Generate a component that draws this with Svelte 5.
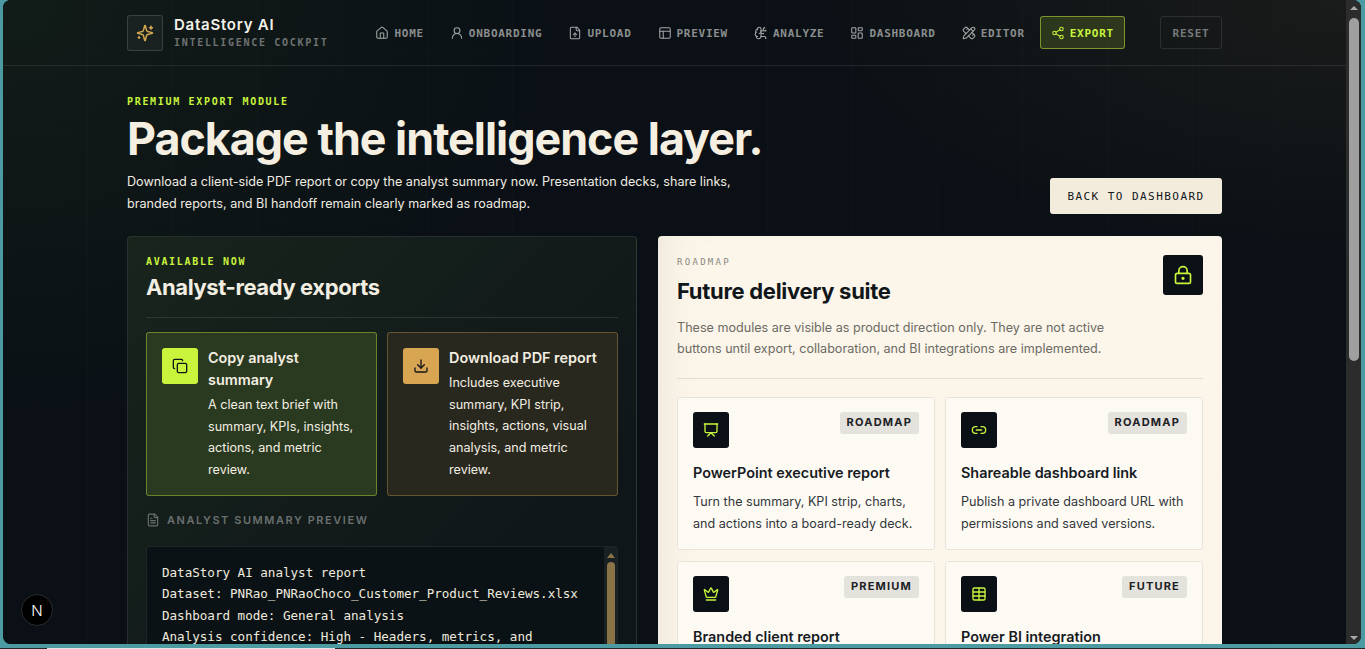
<script lang="ts">
// Export page of the DataStory AI cockpit

const icons: Record<string, string> = {
	home: '<path d="M15 21v-8a1 1 0 0 0-1-1h-4a1 1 0 0 0-1 1v8"/><path d="M3 10a2 2 0 0 1 .709-1.528l7-5.999a2 2 0 0 1 2.582 0l7 5.999A2 2 0 0 1 21 10v9a2 2 0 0 1-2 2H5a2 2 0 0 1-2-2z"/>',
	user: '<circle cx="12" cy="8" r="5"/><path d="M20 21a8 8 0 0 0-16 0"/>',
	upload: '<path d="M15 2H6a2 2 0 0 0-2 2v16a2 2 0 0 0 2 2h12a2 2 0 0 0 2-2V7Z"/><path d="M14 2v4a2 2 0 0 0 2 2h4"/><path d="M12 12v6"/><path d="m15 15-3-3-3 3"/>',
	preview: '<rect width="18" height="18" x="3" y="3" rx="2"/><path d="M3 9h18"/><path d="M9 21V9"/>',
	brain: '<path d="M12 5a3 3 0 1 0-5.997.125 4 4 0 0 0-2.526 5.77 4 4 0 0 0 .556 6.588A4 4 0 1 0 12 18Z"/><path d="M9 13a4.5 4.5 0 0 0 3-4"/><path d="M6.003 5.125A3 3 0 0 0 6.401 6.5"/><path d="M3.477 10.896a4 4 0 0 1 .585-.396"/><path d="M6 18a4 4 0 0 1-1.967-.516"/><path d="M12 13h4"/><path d="M12 18h6a2 2 0 0 1 2 2v1"/><path d="M12 8h8"/><path d="M16 8V5a2 2 0 0 1 2-2"/><circle cx="16" cy="13" r=".5"/><circle cx="18" cy="3" r=".5"/><circle cx="20" cy="21" r=".5"/><circle cx="20" cy="8" r=".5"/>',
	dashboard: '<rect width="7" height="9" x="3" y="3" rx="1"/><rect width="7" height="5" x="14" y="3" rx="1"/><rect width="7" height="9" x="14" y="12" rx="1"/><rect width="7" height="5" x="3" y="16" rx="1"/>',
	editor: '<path d="M13 7 8.7 2.7a2.41 2.41 0 0 0-3.4 0L2.7 5.3a2.41 2.41 0 0 0 0 3.4L7 13"/><path d="m8 6 2-2"/><path d="m18 16 2-2"/><path d="m17 11 4.3 4.3c.94.94.94 2.46 0 3.4l-2.6 2.6c-.94.94-2.46.94-3.4 0L11 17"/><path d="M21.174 6.812a1 1 0 0 0-3.986-3.987L3.842 16.174a2 2 0 0 0-.5.83l-1.321 4.352a.5.5 0 0 0 .623.622l4.353-1.32a2 2 0 0 0 .83-.497z"/><path d="m15 5 4 4"/>',
	share: '<circle cx="18" cy="5" r="3"/><circle cx="6" cy="12" r="3"/><circle cx="18" cy="19" r="3"/><line x1="8.59" x2="15.42" y1="13.51" y2="17.49"/><line x1="15.41" x2="8.59" y1="6.51" y2="10.49"/>',
	sparkles: '<path d="M9.937 15.5A2 2 0 0 0 8.5 14.063l-6.135-1.582a.5.5 0 0 1 0-.962L8.5 9.936A2 2 0 0 0 9.937 8.5l1.582-6.135a.5.5 0 0 1 .963 0L14.063 8.5A2 2 0 0 0 15.5 9.937l6.135 1.581a.5.5 0 0 1 0 .964L15.5 14.063a2 2 0 0 0-1.437 1.437l-1.582 6.135a.5.5 0 0 1-.963 0z"/><path d="M20 3v4"/><path d="M22 5h-4"/><path d="M4 17v2"/><path d="M5 18H3"/>',
	copy: '<rect width="14" height="14" x="8" y="8" rx="2"/><path d="M4 16c-1.1 0-2-.9-2-2V4c0-1.1.9-2 2-2h10c1.1 0 2 .9 2 2"/>',
	download: '<path d="M21 15v4a2 2 0 0 1-2 2H5a2 2 0 0 1-2-2v-4"/><polyline points="7 10 12 15 17 10"/><line x1="12" x2="12" y1="15" y2="3"/>',
	file: '<path d="M15 2H6a2 2 0 0 0-2 2v16a2 2 0 0 0 2 2h12a2 2 0 0 0 2-2V7Z"/><path d="M14 2v4a2 2 0 0 0 2 2h4"/><path d="M10 9H8"/><path d="M16 13H8"/><path d="M16 17H8"/>',
	lock: '<circle cx="12" cy="16" r="1"/><rect x="3" y="10" width="18" height="12" rx="2"/><path d="M7 10V7a5 5 0 0 1 10 0v3"/>',
	deck: '<path d="M2 3h20"/><path d="M21 3v11a2 2 0 0 1-2 2H5a2 2 0 0 1-2-2V3"/><path d="m7 21 5-5 5 5"/>',
	link: '<path d="M9 17H7A5 5 0 0 1 7 7h2"/><path d="M15 7h2a5 5 0 1 1 0 10h-2"/><line x1="8" x2="16" y1="12" y2="12"/>',
	crown: '<path d="M11.562 3.266a.5.5 0 0 1 .876 0L15.39 8.87a1 1 0 0 0 1.516.294L21.183 5.5a.5.5 0 0 1 .798.519l-2.834 10.246a1 1 0 0 1-.956.734H5.81a1 1 0 0 1-.957-.734L2.02 6.02a.5.5 0 0 1 .798-.519l4.276 3.664a1 1 0 0 0 1.516-.294z"/><path d="M5 21h14"/>',
	table: '<path d="M12 3v18"/><rect width="18" height="18" x="3" y="3" rx="2"/><path d="M3 9h18"/><path d="M3 15h18"/>'
};

const navItems = [
	{ label: 'Home', icon: 'home' },
	{ label: 'Onboarding', icon: 'user' },
	{ label: 'Upload', icon: 'upload' },
	{ label: 'Preview', icon: 'preview' },
	{ label: 'Analyze', icon: 'brain' },
	{ label: 'Dashboard', icon: 'dashboard' },
	{ label: 'Editor', icon: 'editor' },
	{ label: 'Export', icon: 'share', active: true }
];

const roadmapItems = [
	{ title: 'PowerPoint executive report', icon: 'deck', badge: 'Roadmap', text: 'Turn the summary, KPI strip, charts, and actions into a board-ready deck.' },
	{ title: 'Shareable dashboard link', icon: 'link', badge: 'Roadmap', text: 'Publish a private dashboard URL with permissions and saved versions.' },
	{ title: 'Branded client report', icon: 'crown', badge: 'Premium', text: '' },
	{ title: 'Power BI integration', icon: 'table', badge: 'Future', text: '' }
];

const summary = `DataStory AI analyst report
Dataset: PNRao_PNRaoChoco_Customer_Product_Reviews.xlsx
Dashboard mode: General analysis
Analysis confidence: High - Headers, metrics, and`;
</script>

{#snippet icon(name: string, size: number)}
	<svg width={size} height={size} viewBox="0 0 24 24" fill="none" stroke="currentColor" stroke-width="2" stroke-linecap="round" stroke-linejoin="round">
		{@html icons[name]}
	</svg>
{/snippet}

<div class="frame">
	<div class="window">
		<div class="page">
			<header class="topbar">
				<div class="topbar-inner">
					<div class="brand">
						<span class="brand-icon">{@render icon('sparkles', 18)}</span>
						<div>
							<div class="brand-name">DataStory AI</div>
							<div class="brand-sub">Intelligence cockpit</div>
						</div>
					</div>
					<nav class="nav">
						{#each navItems as item}
							<a class="nav-item" class:active={item.active} href="#top">
								{@render icon(item.icon, 14)}
								<span>{item.label}</span>
							</a>
						{/each}
					</nav>
					<button class="reset">Reset</button>
				</div>
			</header>

			<main class="content">
				<section class="hero">
					<div>
						<div class="eyebrow">Premium export module</div>
						<h1>Package the intelligence layer.</h1>
						<p>Download a client-side PDF report or copy the analyst summary now. Presentation decks, share links, branded reports, and BI handoff remain clearly marked as roadmap.</p>
					</div>
					<button class="back">Back to dashboard</button>
				</section>

				<section class="columns">
					<div class="panel dark">
						<div class="eyebrow small">Available now</div>
						<h2>Analyst-ready exports</h2>
						<div class="rule"></div>
						<div class="exports">
							<button class="export-card lime">
								<span class="export-icon">{@render icon('copy', 16)}</span>
								<span class="export-copy">
									<strong>Copy analyst summary</strong>
									<span>A clean text brief with summary, KPIs, insights, actions, and metric review.</span>
								</span>
							</button>
							<button class="export-card gold">
								<span class="export-icon">{@render icon('download', 16)}</span>
								<span class="export-copy">
									<strong>Download PDF report</strong>
									<span>Includes executive summary, KPI strip, insights, actions, visual analysis, and metric review.</span>
								</span>
							</button>
						</div>
						<div class="preview-label">
							{@render icon('file', 14)}
							<span>Analyst summary preview</span>
						</div>
						<div class="preview">
							<pre>{summary}</pre>
							<div class="mini-scroll">
								<i class="arrow"></i>
								<i class="mini-thumb"></i>
							</div>
						</div>
					</div>

					<div class="panel light">
						<div class="light-head">
							<div>
								<div class="tag">Roadmap</div>
								<h2>Future delivery suite</h2>
							</div>
							<span class="tile lock">{@render icon('lock', 20)}</span>
						</div>
						<p class="lead">These modules are visible as product direction only. They are not active buttons until export, collaboration, and BI integrations are implemented.</p>
						<div class="rule"></div>
						<div class="roadmap">
							{#each roadmapItems as item}
								<article class="road-card">
									<div class="road-top">
										<span class="tile">{@render icon(item.icon, 16)}</span>
										<span class="badge">{item.badge}</span>
									</div>
									<h3>{item.title}</h3>
									<p>{item.text}</p>
								</article>
							{/each}
						</div>
					</div>
				</section>
			</main>

			<div class="next-badge">N</div>
		</div>

		<div class="scrollbar">
			<i class="arrow up"></i>
			<i class="thumb"></i>
			<i class="arrow down"></i>
		</div>
	</div>
	<div class="taskline"></div>
</div>

<style>
:global(body) {
	margin: 0;
	background: #4c9aa2;
	overflow: hidden;
}

.frame {
	display: flex;
	flex-direction: column;
	gap: 4px;
	height: 649px;
	padding: 0 4px 0 3px;
	box-sizing: border-box;
}

.window {
	flex: 1;
	min-height: 0;
	display: flex;
	border-radius: 8px;
	overflow: hidden;
	background: #0a1015;
}

.taskline {
	flex: none;
	height: 1px;
	margin: 0 -4px 0 -3px;
	background: linear-gradient(90deg, #23282a 47px, #dfe3e3 47px, #dfe3e3 335px, #23282a 335px);
}

.page {
	position: relative;
	flex: 1;
	min-width: 0;
	height: 100%;
	overflow: hidden;
	font-family: Inter, "Noto Sans", sans-serif;
	color: #f5efe1;
	background:
		repeating-linear-gradient(90deg, transparent 0 84px, rgba(255, 255, 255, 0.012) 84px 85px),
		repeating-linear-gradient(0deg, transparent 0 84px, rgba(255, 255, 255, 0.008) 84px 85px),
		radial-gradient(ellipse 560px 420px at 0 0, rgba(60, 90, 40, 0.16), transparent 100%),
		radial-gradient(ellipse 560px 260px at 100% 0, rgba(60, 52, 38, 0.32), transparent 100%),
		#0a1015;
}

/* Top bar */
.topbar {
	height: 65px;
	border-bottom: 1px solid rgba(255, 255, 255, 0.09);
}

.topbar-inner {
	display: flex;
	align-items: center;
	width: 1095px;
	height: 100%;
	margin: 0 auto;
}

.brand {
	display: flex;
	align-items: center;
	gap: 11px;
	margin-right: 36px;
}

.brand-icon {
	display: flex;
	align-items: center;
	justify-content: center;
	width: 34px;
	height: 34px;
	border: 1px solid rgba(255, 255, 255, 0.14);
	border-radius: 3px;
	background: rgba(255, 255, 255, 0.04);
	color: #d3a64f;
}

.brand-name {
	font-size: 15px;
	font-weight: 600;
	line-height: 18px;
	letter-spacing: 0.75px;
	color: #f4f1e8;
}

.brand-sub {
	margin-top: 1px;
	font-family: "DejaVu Sans Mono", monospace;
	font-size: 10px;
	font-weight: 700;
	line-height: 15px;
	letter-spacing: 1.7px;
	text-transform: uppercase;
	color: #6f7273;
}

.nav {
	display: flex;
	gap: 4px;
}

.nav-item {
	display: flex;
	align-items: center;
	gap: 5px;
	height: 31px;
	padding: 0 10px;
	border: 1px solid transparent;
	border-radius: 3px;
	font-family: "DejaVu Sans Mono", monospace;
	font-size: 11px;
	font-weight: 700;
	letter-spacing: 0.73px;
	text-transform: uppercase;
	text-decoration: none;
	color: #8b8e8e;
}

.nav-item span {
	padding-top: 2px;
}

.nav-item svg {
	stroke-width: 1.8;
	color: #a3a6a6;
}

.nav-item.active {
	border-color: rgba(200, 245, 60, 0.5);
	background: rgba(200, 245, 60, 0.15);
	color: #c8f53c;
}

.nav-item.active svg {
	color: #c8f53c;
}

.reset {
	margin-left: auto;
	width: 62px;
	height: 33px;
	padding: 2px 0 0;
	border: 1px solid rgba(255, 255, 255, 0.1);
	border-radius: 3px;
	background: transparent;
	font-family: "DejaVu Sans Mono", monospace;
	font-size: 11px;
	font-weight: 700;
	letter-spacing: 0.75px;
	text-transform: uppercase;
	color: #777a7a;
}

/* Hero */
.content {
	width: 1095px;
	margin: 0 auto;
	padding-top: 29px;
}

.hero {
	display: flex;
	align-items: flex-end;
	justify-content: space-between;
	margin-bottom: 22px;
}

.eyebrow {
	font-family: "DejaVu Sans Mono", monospace;
	font-size: 10px;
	font-weight: 700;
	line-height: 14px;
	letter-spacing: 1.68px;
	text-transform: uppercase;
	color: #c8f53c;
}

h1 {
	margin: 7px 0 9px;
	font-size: 44.8px;
	font-weight: 700;
	line-height: 46px;
	letter-spacing: -1px;
	color: #f5efe1;
}

.hero p {
	width: 620px;
	margin: 0;
	font-size: 12.6px;
	line-height: 21.5px;
	color: #f0ece2;
}

.back {
	width: 172px;
	height: 36px;
	padding: 0;
	border: 0;
	border-radius: 3px;
	background: #f3ebdb;
	font-family: "DejaVu Sans Mono", monospace;
	font-size: 11px;
	font-weight: 500;
	letter-spacing: 1.45px;
	text-transform: uppercase;
	color: #11161a;
}

/* Panels */
.columns {
	display: grid;
	grid-template-columns: 510px 564px;
	gap: 21px;
	align-items: start;
}

.panel {
	padding: 19px;
	border-radius: 4px;
	box-sizing: border-box;
}

.panel.dark {
	border: 1px solid rgba(255, 255, 255, 0.1);
	padding: 18px;
	background: linear-gradient(135deg, #18241c, #0f1619 70%);
}

.panel.light {
	background: #fbf5ea;
	color: #11161a;
	box-shadow: inset 30px 0 40px -30px rgba(120, 110, 90, 0.14);
}

.panel h2 {
	margin: 3px 0 15px;
	font-size: 22px;
	font-weight: 700;
	line-height: 30px;
	letter-spacing: -0.4px;
	color: #f3eee2;
}

.rule {
	height: 1px;
	background: rgba(255, 255, 255, 0.1);
}

.exports {
	display: grid;
	grid-template-columns: 231px 231px;
	gap: 10px;
	margin-top: 14px;
}

.export-card {
	display: flex;
	gap: 10px;
	padding: 15px 15px 14px;
	border-radius: 3px;
	font-family: inherit;
	text-align: left;
	color: #f3eee2;
}

.export-card.lime {
	border: 1px solid rgba(200, 245, 60, 0.4);
	background: #2a3a20;
}

.export-card.gold {
	border: 1px solid rgba(211, 166, 79, 0.35);
	background: #28281f;
}

.export-icon {
	flex: none;
	display: flex;
	align-items: center;
	justify-content: center;
	width: 36px;
	height: 36px;
	border-radius: 3px;
	color: #11161a;
}

.lime .export-icon {
	background: #c8f53c;
}

.gold .export-icon {
	background: #d8a653;
}

.export-copy {
	display: flex;
	flex-direction: column;
	font-size: 12.6px;
	line-height: 21.7px;
}

.export-copy strong {
	margin: -1px 0 3px;
	font-size: 14.4px;
	font-weight: 600;
	line-height: 22px;
}

.preview-label {
	display: flex;
	align-items: center;
	gap: 7px;
	margin-top: 16px;
	height: 16px;
	font-size: 11px;
	font-weight: 600;
	letter-spacing: 1.55px;
	text-transform: uppercase;
	color: #6a6f70;
}

.preview {
	position: relative;
	margin-top: 18px;
	height: 220px;
	border: 1px solid rgba(255, 255, 255, 0.08);
	border-radius: 3px;
	background: #0b1216;
	overflow: hidden;
}

.preview pre {
	margin: 0;
	padding: 15px;
	font-family: "DejaVu Sans Mono", monospace;
	font-size: 12.6px;
	line-height: 21.4px;
	letter-spacing: -0.02px;
	color: #eeeade;
}

.mini-scroll {
	position: absolute;
	top: 0;
	right: 0;
	bottom: 0;
	width: 13px;
	background: #182024;
}

.mini-scroll .arrow {
	display: block;
	width: 0;
	margin: 6px auto 0;
	border: 4px solid transparent;
	border-top: 0;
	border-bottom: 5px solid #8a7347;
}

.mini-thumb {
	display: block;
	width: 8px;
	height: 120px;
	margin: 4px auto 0;
	border-radius: 4px;
	background: #8a7347;
}

/* Light panel */
.light-head {
	display: flex;
	align-items: flex-start;
	justify-content: space-between;
}

.tag {
	font-family: "DejaVu Sans Mono", monospace;
	font-size: 9px;
	line-height: 14px;
	letter-spacing: 2.3px;
	text-transform: uppercase;
	color: #8a8880;
}

.panel.light h2 {
	margin: 8px 0 0;
	line-height: 28px;
	letter-spacing: -0.3px;
	color: #11161a;
}

.tile {
	flex: none;
	display: flex;
	align-items: center;
	justify-content: center;
	width: 36px;
	height: 36px;
	border-radius: 3px;
	background: #0a1015;
	color: #c8f53c;
}

.tile.lock {
	width: 40px;
	height: 40px;
}

.lead {
	width: 470px;
	margin: 12px 0 19px;
	font-size: 12.6px;
	line-height: 21.2px;
	color: #6c6b64;
}

.panel.light .rule {
	background: #e3ddcf;
}

.roadmap {
	display: grid;
	grid-template-columns: 258px 258px;
	gap: 11px 10px;
	margin-top: 18px;
}

.road-card {
	height: 153px;
	padding: 14px 15px;
	border: 1px solid #e9e4da;
	border-radius: 3px;
	background: #fdfaf4;
	box-sizing: border-box;
}

.road-top {
	display: flex;
	align-items: flex-start;
	justify-content: space-between;
}

.badge {
	padding: 2px 7px 4px;
	border-radius: 3px;
	background: #e3e2dd;
	font-size: 11px;
	font-weight: 700;
	line-height: 16px;
	letter-spacing: 1.2px;
	text-transform: uppercase;
	color: #1c2024;
}

.road-card h3 {
	margin: 14px 0 8px;
	font-size: 14.4px;
	font-weight: 600;
	line-height: 21px;
	color: #171b1f;
}

.road-card p {
	margin: 0;
	font-size: 12.6px;
	line-height: 22px;
	color: #33373a;
}

/* Dev badge */
.next-badge {
	position: absolute;
	left: 18px;
	bottom: 18px;
	display: flex;
	align-items: center;
	justify-content: center;
	width: 32px;
	height: 32px;
	border: 1px solid #2a2d30;
	border-radius: 50%;
	background: #000;
	box-sizing: border-box;
	font-family: Inter, sans-serif;
	font-size: 15px;
	font-weight: 300;
	color: #fff;
}

/* Window scrollbar */
.scrollbar {
	flex: none;
	display: flex;
	flex-direction: column;
	width: 15px;
	background: #2c2c2c;
}

.scrollbar .arrow {
	display: block;
	width: 0;
	margin: 6px auto 8px;
	border: 4px solid transparent;
}

.scrollbar .up {
	border-top: 0;
	border-bottom: 4px solid #a8a8a8;
}

.scrollbar .down {
	margin-top: auto;
	margin-bottom: 4px;
	border-bottom: 0;
	border-top: 4px solid #a8a8a8;
}

.thumb {
	display: block;
	width: 10px;
	height: 343px;
	margin: 0 auto;
	border-radius: 5px;
	background: #9f9f9f;
}
</style>
